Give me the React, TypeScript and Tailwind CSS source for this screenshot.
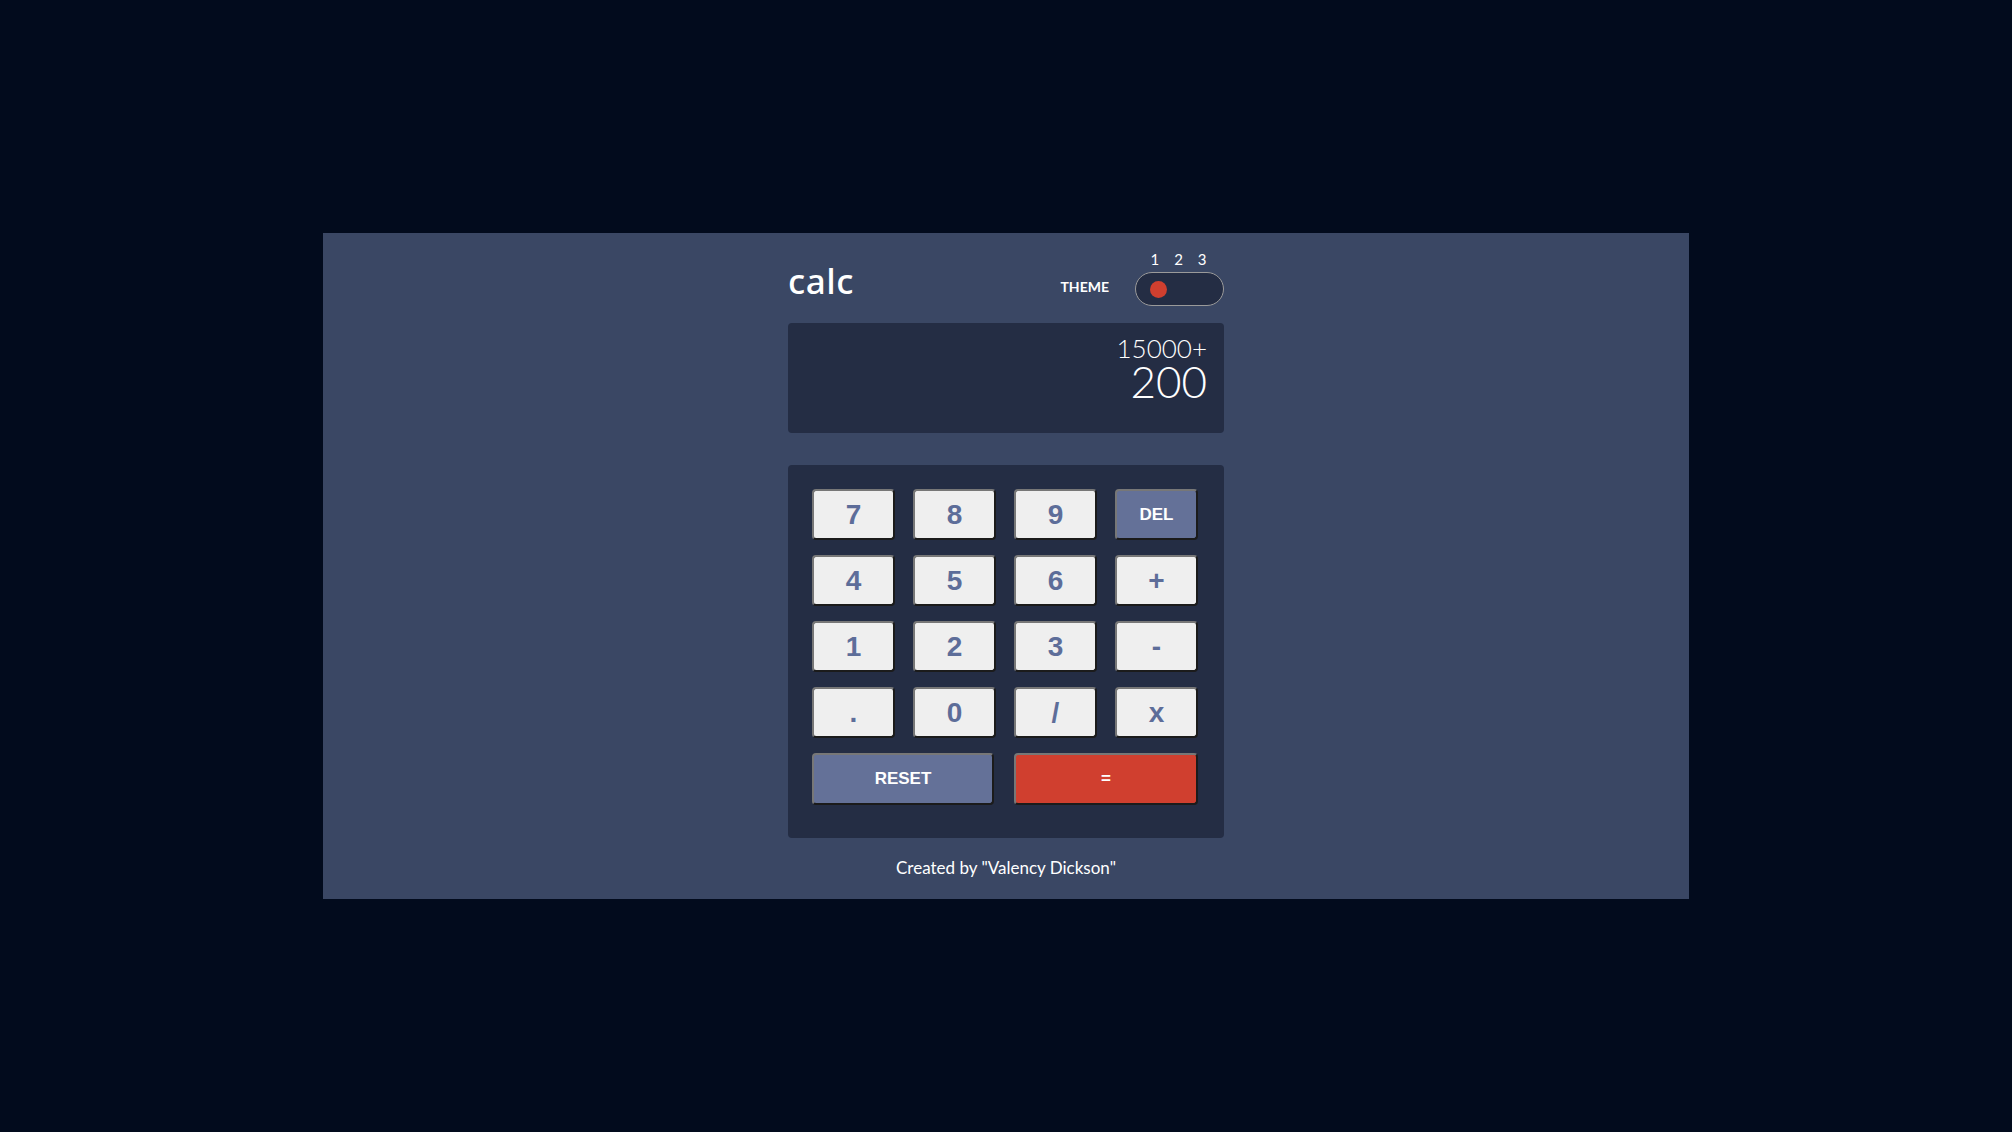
import React from "react";

const keys = ["7", "8", "9", "DEL", "4", "5", "6", "+", "1", "2", "3", "-", ".", "0", "/", "x"];

const keyBase =
    "h-[51px] rounded-[4px] border-2 border-t-[#777777] border-l-[#777777] border-b-[#1b1b1b] border-r-[#1b1b1b] font-['Liberation_Sans',Arial,sans-serif] font-bold";

const App = () => {
    return (
        <div className="min-h-screen bg-[#020b1d] flex items-center justify-center">
            <div className="w-[1366px] h-[666px] bg-[#3a4764] flex flex-col items-center pt-[21px]">
                <div className="w-[436px]">
                    <div className="flex items-end justify-between h-[52px]">
                        <div className="text-white text-[35px] leading-none font-['Noto_Sans',sans-serif] font-medium pb-[8px] tracking-[0.5px]">
                            calc
                        </div>
                        <div className="flex items-end gap-[26px]">
                            <div className="text-white text-[14px] font-bold uppercase font-['Lato','Noto_Sans',sans-serif] pb-[9px]">
                                Theme
                            </div>
                            <div className="flex flex-col items-center">
                                <div className="flex gap-[15px] pr-[2px] text-white text-[15px] leading-none font-['Lato',sans-serif] mb-[5px]">
                                    <span>1</span>
                                    <span>2</span>
                                    <span>3</span>
                                </div>
                                <div className="w-[89px] h-[34px] rounded-full bg-[#242d44] border-[1.5px] border-[#9a9a9a] flex items-center pl-[14px]">
                                    <div className="w-[17px] h-[17px] rounded-full bg-[#d03f2f]" />
                                </div>
                            </div>
                        </div>
                    </div>

                    <div className="mt-[17px] h-[110px] bg-[#242d44] rounded-[4px] flex flex-col items-end pt-[12px] pr-[17px] text-white font-['Lato',sans-serif] font-light">
                        <div className="text-[26px] leading-[26px]">15000+</div>
                        <div className="text-[44px] leading-[40px]">200</div>
                    </div>

                    <div className="mt-[32px] h-[373px] bg-[#242d44] rounded-[4px] pt-[24px] pl-[24px] pr-[26px]">
                        <div className="grid grid-cols-4 gap-x-[18px] gap-y-[15px]">
                            {keys.map((k) => (
                                <button
                                    key={k}
                                    className={
                                        k === "DEL"
                                            ? keyBase + " bg-[#647198] text-white text-[17px]"
                                            : keyBase + " bg-[#efefef] text-[#5d6d99] text-[28px]"
                                    }
                                >
                                    {k}
                                </button>
                            ))}
                            <button className={keyBase + " col-span-2 mr-[2px] bg-[#647198] text-white text-[17px] h-[52px]"}>
                                RESET
                            </button>
                            <button className={keyBase + " col-span-2 bg-[#d03f2f] text-white text-[17px] h-[52px]"}>
                                =
                            </button>
                        </div>
                    </div>

                    <div className="mt-[17px] text-center text-white text-[17px] font-['Lato','Noto_Sans',sans-serif]">
                        Created by "Valency Dickson"
                    </div>
                </div>
            </div>
        </div>
    );
};

export default App;
